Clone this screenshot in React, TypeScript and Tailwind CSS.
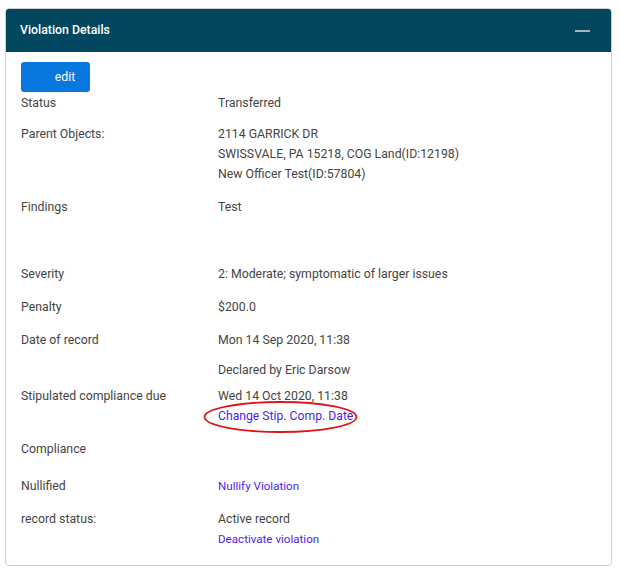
const TEXT = "text-[#444]"
const LINK = "text-[#4b1ef0]"

function Row({ label, className, children }: { label: string; className?: string; children?: React.ReactNode }) {
  return (
    <div className={`flex leading-[20px] ${className || ""}`}>
      <div className={`w-[197px] shrink-0 ${TEXT}`}>{label}</div>
      <div className={`flex-1 ${TEXT}`}>{children}</div>
    </div>
  )
}

export default function App() {
  return (
    <div className="w-[622px] h-[574px] bg-white pt-[8px] pl-[5px]" style={{ fontFamily: "Roboto, 'Liberation Sans', sans-serif" }}>
      <div className="w-[607px] rounded-[4px] border border-[#cfcfcf] overflow-hidden">
        <div className="h-[44px] bg-[#02475f] flex items-center justify-between pl-[15px] pr-[22px] -mx-px -mt-px">
          <span className="text-white text-[12.3px] font-medium pt-px">Violation Details</span>
          <span className="block w-[15px] h-[2px] bg-[#a9b4bb] mt-[2px]" />
        </div>
        <div className="px-[15px] pt-[10px] pb-[16px] text-[12.3px]">
          <button className="w-[69px] h-[30px] rounded-[3px] bg-[#0877df] text-white text-[12.3px] pl-[19px]">edit</button>
          <Row label="Status" className="mt-px">Transferred</Row>
          <Row label="Parent Objects:" className="mt-[11px]">
            <div>2114 GARRICK DR</div>
            <div>SWISSVALE, PA 15218, COG Land(ID:12198)</div>
            <div>New Officer Test(ID:57804)</div>
          </Row>
          <Row label="Findings" className="mt-[13px]">Test</Row>
          <Row label="Severity" className="mt-[47px]">2: Moderate; symptomatic of larger issues</Row>
          <Row label="Penalty" className="mt-[13px]">$200.0</Row>
          <Row label="Date of record" className="mt-[13px]">
            <div>Mon 14 Sep 2020, 11:38</div>
            <div className="mt-[10px]">Declared by Eric Darsow</div>
          </Row>
          <Row label="Stipulated compliance due" className="mt-[6px]">
            <div>Wed 14 Oct 2020, 11:38</div>
            <div className="relative">
              <a className={`${LINK} text-[12.2px]`}>Change Stip. Comp. Date</a>
              <svg className="absolute left-[-15px] top-[-5px]" width="156" height="33" viewBox="0 0 156 33">
                <ellipse cx="77.5" cy="16" rx="76" ry="15" fill="none" stroke="#e0141b" strokeWidth="1.8" />
              </svg>
            </div>
          </Row>
          <Row label="Compliance" className="mt-[13px]" />
          <Row label="Nullified" className="mt-[17px]">
            <a className={`${LINK} text-[11.6px]`}>Nullify Violation</a>
          </Row>
          <Row label="record status:" className="mt-[13px]">
            <div>Active record</div>
            <a className={`${LINK} text-[11.6px]`}>Deactivate violation</a>
          </Row>
        </div>
      </div>
    </div>
  )
}
